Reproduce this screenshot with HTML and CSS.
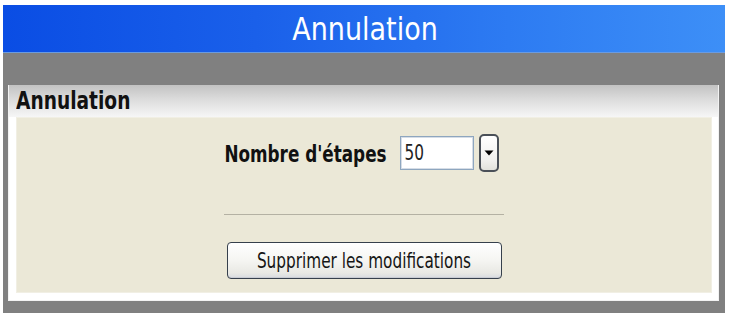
FILE: index.html
```html
<!DOCTYPE html>
<html lang="fr">
<head>
<meta charset="utf-8">
<title>Annulation</title>
<link rel="stylesheet" href="styles.css">
</head>
<body>
<div class="window">
  <div class="titlebar"><span class="title">Annulation</span></div>
  <div class="workspace">
    <div class="panel">
      <div class="panel-header"><span class="tall">Annulation</span></div>
      <div class="panel-content">
        <div class="field-row">
          <label class="field-label" for="steps"><span class="tall">Nombre d'étapes</span></label>
          <div class="field-input"><span class="tall">50</span></div>
          <button class="drop-btn" type="button" aria-label="Ouvrir">
            <svg width="10" height="6" viewBox="0 0 10 6"><path d="M0.5 0.5 H9.5 L5 5.5 Z" fill="#000"/></svg>
          </button>
        </div>
        <div class="separator"></div>
        <button class="action-btn" type="button"><span class="tall">Supprimer les modifications</span></button>
      </div>
    </div>
  </div>
</div>
</body>
</html>
```
FILE: styles.css
```css
html, body {
  margin: 0;
  padding: 0;
  background: #ffffff;
}

body {
  font-family: "DejaVu Sans Condensed", "DejaVu Sans", sans-serif;
  font-stretch: condensed;
}

.tall {
  display: inline-block;
  transform: scaleY(1.2);
}

.window {
  width: 722px;
  margin: 5px 0 0 3px;
}

.titlebar {
  height: 47px;
  background: linear-gradient(90deg, #0a4de4 0%, #1a60ea 35%, #2d7bf2 70%, #3d8ff7 100%);
  border-bottom: 1px solid #6b9be0;
  display: flex;
  align-items: center;
  justify-content: center;
}

.title {
  color: #ffffff;
  font-size: 30px;
  line-height: 1;
  margin-left: 2px;
  margin-top: 1px;
  display: inline-block;
  transform: scaleY(1.05);
}

.workspace {
  background: #808080;
  padding: 32px 6px 12px 5px;
}

.panel {
  background: #ffffff;
  padding: 0 6px 7px 7px;
  border: 1px solid #f2f2f2;
  border-top: none;
}

.panel-header {
  height: 32px;
  margin: 0 -6px 0 -7px;
  padding-left: 7px;
  background: linear-gradient(180deg, #c2c2c2 0%, #dcdcdc 45%, #f6f6f6 100%);
  font-weight: bold;
  font-size: 20.7px;
  line-height: 32px;
  color: #111111;
  box-sizing: border-box;
}

.panel-content {
  background: #ebe8d7;
  border: 1px solid #f1efe4;
  height: 176px;
  box-sizing: border-box;
  display: flex;
  flex-direction: column;
  align-items: center;
  padding-top: 16px;
}

.field-row {
  display: flex;
  align-items: center;
  height: 38px;
  margin-right: 5px;
}

.field-label {
  font-weight: bold;
  font-size: 18.7px;
  color: #111111;
  margin-right: 13px;
  margin-top: 2px;
}

.field-input {
  width: 74px;
  height: 34px;
  box-sizing: border-box;
  border: 1px solid #8ea6bf;
  box-shadow: inset 0 0 0 1px #d6dde6;
  background: #ffffff;
  font-size: 17px;
  color: #222222;
  padding-left: 4px;
  display: flex;
  align-items: center;
}

.drop-btn {
  width: 20px;
  height: 38px;
  margin-left: 5px;
  padding: 0;
  box-sizing: border-box;
  border: 2px solid #4a5058;
  border-radius: 5px;
  background: linear-gradient(180deg, #ffffff 0%, #f1f1ee 70%, #e2e2dc 100%);
  display: flex;
  align-items: center;
  justify-content: center;
}

.separator {
  width: 280px;
  border-top: 1px solid #b4b1a3;
  margin-top: 42px;
}

.action-btn {
  margin-top: 27px;
  width: 275px;
  height: 37px;
  box-sizing: border-box;
  border: 1px solid #36404c;
  border-radius: 4px;
  background: linear-gradient(180deg, #ffffff 0%, #f5f5f2 50%, #e9e9e4 85%, #d8dbe0 100%);
  box-shadow: inset 0 -1px 0 #c9ccd3;
  font-family: "DejaVu Sans Condensed", "DejaVu Sans", sans-serif;
  font-stretch: condensed;
  font-size: 17px;
  color: #151515;
  padding: 0;
}
```
